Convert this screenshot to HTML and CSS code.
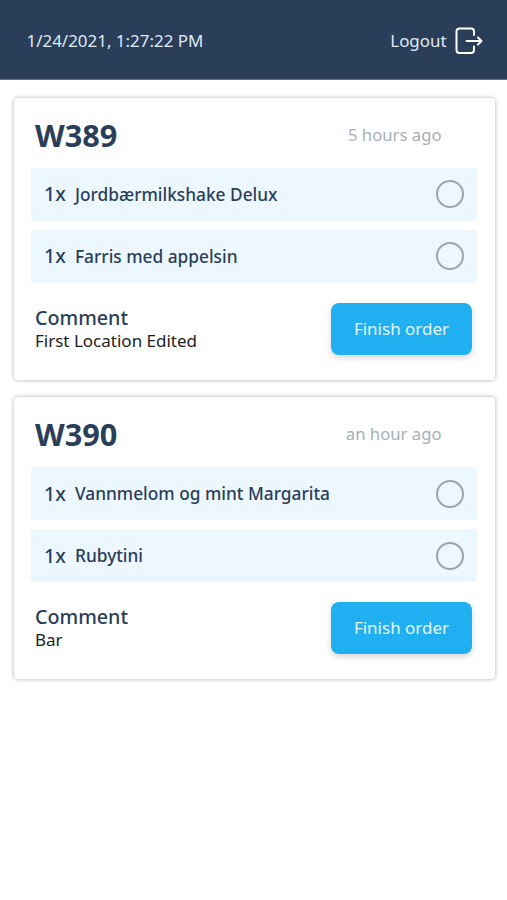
FILE: index.html
```html
<!DOCTYPE html>
<html lang="en">
<head>
<meta charset="utf-8">
<title>Orders</title>
<link rel="stylesheet" href="styles.css">
</head>
<body>
<header class="topbar">
  <time class="clock">1/24/2021, 1:27:22 PM</time>
  <a class="logout"><span class="logout-label">Logout</span>
    <svg class="logout-icon" width="28" height="28" viewBox="0 0 28 28" fill="none" stroke="currentColor" stroke-width="2" stroke-linecap="round" stroke-linejoin="round"><path d="M19 8V4.500Q19 1.500 16 1.500H4.500Q1.500 1.500 1.500 4.500V23Q1.500 26 4.500 26H16Q19 26 19 23V19.500M11.500 14H26.500M23 10.500L26.500 14L23 17.500"/></svg>
  </a>
</header>
<main class="orders">
  <section class="card">
    <div class="card-head"><h2 class="code">W389</h2><span class="ago">5 hours ago</span></div>
    <ul class="items">
      <li class="item"><span class="qty">1x</span><span class="name">Jordbærmilkshake Delux</span><span class="check"></span></li>
      <li class="item"><span class="qty">1x</span><span class="name">Farris med appelsin</span><span class="check"></span></li>
    </ul>
    <div class="card-foot">
      <div class="comment"><h3 class="comment-title">Comment</h3><p class="comment-text">First Location Edited</p></div>
      <button class="finish">Finish order</button>
    </div>
  </section>
  <section class="card">
    <div class="card-head"><h2 class="code">W390</h2><span class="ago">an hour ago</span></div>
    <ul class="items">
      <li class="item"><span class="qty">1x</span><span class="name">Vannmelom og mint Margarita</span><span class="check"></span></li>
      <li class="item"><span class="qty">1x</span><span class="name">Rubytini</span><span class="check"></span></li>
    </ul>
    <div class="card-foot">
      <div class="comment"><h3 class="comment-title">Comment</h3><p class="comment-text">Bar</p></div>
      <button class="finish">Finish order</button>
    </div>
  </section>
</main>
</body>
</html>
```
FILE: styles.css
```css
* { box-sizing: border-box; margin: 0; padding: 0; }
body {
  min-height: 900px;
  background: #fff;
  color: #2a3e59;
  font-family: "Noto Sans", "Open Sans", sans-serif;
}
.topbar {
  display: flex;
  align-items: center;
  justify-content: space-between;
  height: 80px;
  padding: 2px 24.500px 0 26.500px;
  background: #2b3e59;
  border-bottom: 1px solid #5f6e84;
  color: #dfeaf6;
}
.clock { font-size: 16.950px; line-height: 24px; }
.logout { display: flex; align-items: center; gap: 8px; }
.logout-label { font-size: 16.900px; line-height: 24px; }
.logout-icon { display: block; color: #fff; }
.orders {
  display: flex;
  flex-direction: column;
  gap: 17px;
  padding: 17.500px 12.500px 0 13.500px;
}
.card {
  height: 282.300px;
  padding: 15.500px 18px 0 17.500px;
  border-radius: 4px;
  background: #fff;
  box-shadow: 0 0 4px rgba(0, 0, 0, 0.32);
}
.card-head {
  display: flex;
  align-items: center;
  justify-content: space-between;
  height: 44px;
  padding: 0 35px 1px 4px;
}
.code { font-size: 30.700px; line-height: 40px; font-weight: 700; }
.ago { font-size: 16.700px; line-height: 24px; font-weight: 400; color: #a7afb7; }
.items {
  display: flex;
  flex-direction: column;
  gap: 9.500px;
  padding-top: 11px;
  list-style: none;
}
.item {
  display: flex;
  align-items: center;
  height: 52.500px;
  padding: 0 12.500px 0 13px;
  border-radius: 2px;
  background: #edf7ff;
}
.qty { width: 31px; font-size: 19.500px; line-height: 26px; font-weight: 500; }
.name { flex: 1; padding-top: 1px; font-size: 17.300px; line-height: 24px; font-weight: 500; }
.check {
  width: 28px;
  height: 28px;
  border: 2px solid #98a6af;
  border-radius: 50%;
}
.card-foot {
  display: flex;
  justify-content: space-between;
  padding: 20.500px 4.500px 0 4px;
}
.comment { padding-top: 3px; }
.comment-title { font-size: 19.700px; line-height: 24px; font-weight: 500; }
.comment-text { font-size: 17px; line-height: 21px; color: #1c1c1c; }
.finish {
  width: 141px;
  height: 52px;
  border: 0;
  border-radius: 8px;
  background: #20b0f2;
  box-shadow: 0 3px 6px rgba(0, 0, 0, 0.16);
  color: #e2f6ff;
  font-family: inherit;
  font-size: 17px;
  line-height: 24px;
}
```
